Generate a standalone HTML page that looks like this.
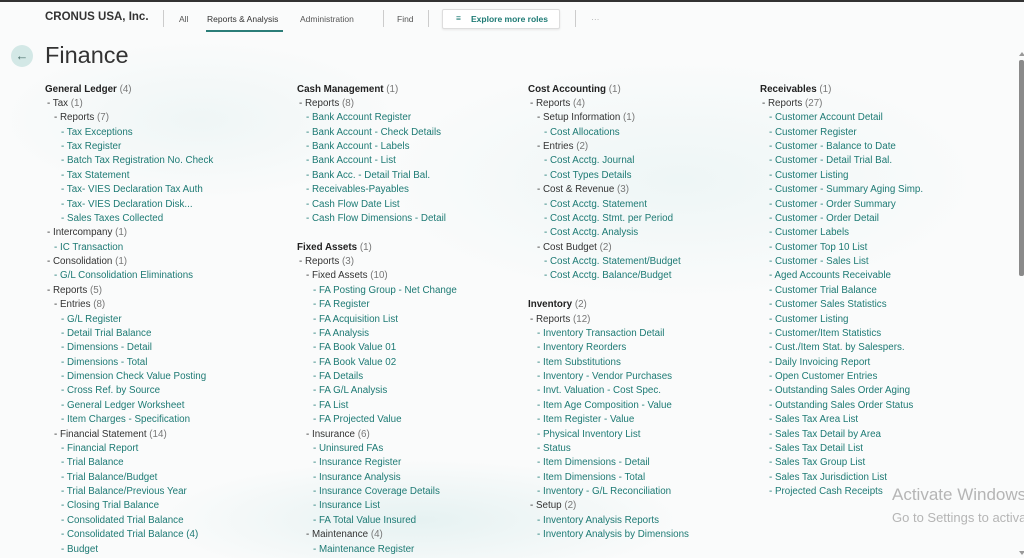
<!DOCTYPE html>
<html><head><meta charset="utf-8">
<style>
*{margin:0;padding:0;box-sizing:border-box}
html,body{width:1024px;height:558px;overflow:hidden}
body{position:relative;font-family:"Liberation Sans",sans-serif;
background:radial-gradient(ellipse 260px 60px at 420px 520px,#e6f2f2 0%,rgba(230,242,242,0) 100%),
radial-gradient(ellipse 300px 120px at 680px 180px,#eef6f6 0%,rgba(238,246,246,0) 100%),
radial-gradient(ellipse 200px 80px at 200px 120px,#eff6f6 0%,rgba(239,246,246,0) 100%),#fafbfb;}
.wrap{position:absolute;left:0;top:0;width:1024px;height:558px;overflow:hidden}
.top{position:absolute;left:0;top:0;width:1024px;height:2px;background:#333}
.hdr{position:absolute;top:0;left:0;width:1024px;height:36px;font-size:8.5px;color:#555}
.hdr span{position:absolute;top:14px}
.sep{position:absolute;top:10px;width:1px;height:17px;background:#ccc}
.col{position:absolute;top:82.5px;font-size:9.8px;line-height:14.375px;color:#333;white-space:nowrap}
.col div{height:14.375px}
.h{font-weight:bold;color:#222}
.c{color:#777;font-weight:normal}
.l{color:#1d7a74}
.i1{padding-left:2px}.i2{padding-left:9px}.i3{padding-left:16px}
.sb{position:absolute;left:1019px;top:60px;width:5px;height:216px;background:#8a8a8a;border-radius:2px}
</style></head><body><div class="wrap">
<div class="top"></div>
<div class="hdr">
<span style="left:45px;top:11px;font-size:11.5px;font-weight:bold;color:#333">CRONUS USA, Inc.</span>
<div class="sep" style="left:163px"></div>
<span style="left:179px">All</span>
<span style="left:207px;color:#333">Reports &amp; Analysis</span>
<div style="position:absolute;left:206px;top:30px;width:77px;height:2px;background:#2b7d78"></div>
<span style="left:300px">Administration</span>
<div class="sep" style="left:383px"></div>
<span style="left:397px">Find</span>
<div class="sep" style="left:428px"></div>
<div style="position:absolute;left:442px;top:9px;width:118px;height:20px;border:1px solid #ddd;border-radius:2px;background:#fff;box-shadow:0 1px 2px rgba(0,0,0,.08)"></div>
<span style="left:456px;top:13px;color:#1d7a74">&#8801;</span>
<span style="left:471px;color:#1d7a74;font-weight:bold">Explore more roles</span>
<div class="sep" style="left:575px"></div>
<span style="left:591px;color:#aaa">···</span>
</div>
<div style="position:absolute;left:11px;top:45px;width:22px;height:22px;border-radius:50%;background:#d3e8e6;color:#4a6f6c;font-size:13px;text-align:center;line-height:21px">&#8592;</div>
<div style="position:absolute;left:45px;top:42px;font-size:23.5px;color:#333">Finance</div>

<div class="col" style="left:45px">
<div class="h">General Ledger <span class="c">(4)</span></div>
<div class="i1">- Tax <span class="c">(1)</span></div>
<div class="i2">- Reports <span class="c">(7)</span></div>
<div class="i3 l">- Tax Exceptions</div>
<div class="i3 l">- Tax Register</div>
<div class="i3 l">- Batch Tax Registration No. Check</div>
<div class="i3 l">- Tax Statement</div>
<div class="i3 l">- Tax- VIES Declaration Tax Auth</div>
<div class="i3 l">- Tax- VIES Declaration Disk...</div>
<div class="i3 l">- Sales Taxes Collected</div>
<div class="i1">- Intercompany <span class="c">(1)</span></div>
<div class="i2 l">- IC Transaction</div>
<div class="i1">- Consolidation <span class="c">(1)</span></div>
<div class="i2 l">- G/L Consolidation Eliminations</div>
<div class="i1">- Reports <span class="c">(5)</span></div>
<div class="i2">- Entries <span class="c">(8)</span></div>
<div class="i3 l">- G/L Register</div>
<div class="i3 l">- Detail Trial Balance</div>
<div class="i3 l">- Dimensions - Detail</div>
<div class="i3 l">- Dimensions - Total</div>
<div class="i3 l">- Dimension Check Value Posting</div>
<div class="i3 l">- Cross Ref. by Source</div>
<div class="i3 l">- General Ledger Worksheet</div>
<div class="i3 l">- Item Charges - Specification</div>
<div class="i2">- Financial Statement <span class="c">(14)</span></div>
<div class="i3 l">- Financial Report</div>
<div class="i3 l">- Trial Balance</div>
<div class="i3 l">- Trial Balance/Budget</div>
<div class="i3 l">- Trial Balance/Previous Year</div>
<div class="i3 l">- Closing Trial Balance</div>
<div class="i3 l">- Consolidated Trial Balance</div>
<div class="i3 l">- Consolidated Trial Balance (4)</div>
<div class="i3 l">- Budget</div>
</div>

<div class="col" style="left:297px">
<div class="h">Cash Management <span class="c">(1)</span></div>
<div class="i1">- Reports <span class="c">(8)</span></div>
<div class="i2 l">- Bank Account Register</div>
<div class="i2 l">- Bank Account - Check Details</div>
<div class="i2 l">- Bank Account - Labels</div>
<div class="i2 l">- Bank Account - List</div>
<div class="i2 l">- Bank Acc. - Detail Trial Bal.</div>
<div class="i2 l">- Receivables-Payables</div>
<div class="i2 l">- Cash Flow Date List</div>
<div class="i2 l">- Cash Flow Dimensions - Detail</div>
<div></div>
<div class="h">Fixed Assets <span class="c">(1)</span></div>
<div class="i1">- Reports <span class="c">(3)</span></div>
<div class="i2">- Fixed Assets <span class="c">(10)</span></div>
<div class="i3 l">- FA Posting Group - Net Change</div>
<div class="i3 l">- FA Register</div>
<div class="i3 l">- FA Acquisition List</div>
<div class="i3 l">- FA Analysis</div>
<div class="i3 l">- FA Book Value 01</div>
<div class="i3 l">- FA Book Value 02</div>
<div class="i3 l">- FA Details</div>
<div class="i3 l">- FA G/L Analysis</div>
<div class="i3 l">- FA List</div>
<div class="i3 l">- FA Projected Value</div>
<div class="i2">- Insurance <span class="c">(6)</span></div>
<div class="i3 l">- Uninsured FAs</div>
<div class="i3 l">- Insurance Register</div>
<div class="i3 l">- Insurance Analysis</div>
<div class="i3 l">- Insurance Coverage Details</div>
<div class="i3 l">- Insurance List</div>
<div class="i3 l">- FA Total Value Insured</div>
<div class="i2">- Maintenance <span class="c">(4)</span></div>
<div class="i3 l">- Maintenance Register</div>
</div>

<div class="col" style="left:528px">
<div class="h">Cost Accounting <span class="c">(1)</span></div>
<div class="i1">- Reports <span class="c">(4)</span></div>
<div class="i2">- Setup Information <span class="c">(1)</span></div>
<div class="i3 l">- Cost Allocations</div>
<div class="i2">- Entries <span class="c">(2)</span></div>
<div class="i3 l">- Cost Acctg. Journal</div>
<div class="i3 l">- Cost Types Details</div>
<div class="i2">- Cost &amp; Revenue <span class="c">(3)</span></div>
<div class="i3 l">- Cost Acctg. Statement</div>
<div class="i3 l">- Cost Acctg. Stmt. per Period</div>
<div class="i3 l">- Cost Acctg. Analysis</div>
<div class="i2">- Cost Budget <span class="c">(2)</span></div>
<div class="i3 l">- Cost Acctg. Statement/Budget</div>
<div class="i3 l">- Cost Acctg. Balance/Budget</div>
<div></div>
<div class="h">Inventory <span class="c">(2)</span></div>
<div class="i1">- Reports <span class="c">(12)</span></div>
<div class="i2 l">- Inventory Transaction Detail</div>
<div class="i2 l">- Inventory Reorders</div>
<div class="i2 l">- Item Substitutions</div>
<div class="i2 l">- Inventory - Vendor Purchases</div>
<div class="i2 l">- Invt. Valuation - Cost Spec.</div>
<div class="i2 l">- Item Age Composition - Value</div>
<div class="i2 l">- Item Register - Value</div>
<div class="i2 l">- Physical Inventory List</div>
<div class="i2 l">- Status</div>
<div class="i2 l">- Item Dimensions - Detail</div>
<div class="i2 l">- Item Dimensions - Total</div>
<div class="i2 l">- Inventory - G/L Reconciliation</div>
<div class="i1">- Setup <span class="c">(2)</span></div>
<div class="i2 l">- Inventory Analysis Reports</div>
<div class="i2 l">- Inventory Analysis by Dimensions</div>
</div>

<div class="col" style="left:760px">
<div class="h">Receivables <span class="c">(1)</span></div>
<div class="i1">- Reports <span class="c">(27)</span></div>
<div class="i2 l">- Customer Account Detail</div>
<div class="i2 l">- Customer Register</div>
<div class="i2 l">- Customer - Balance to Date</div>
<div class="i2 l">- Customer - Detail Trial Bal.</div>
<div class="i2 l">- Customer Listing</div>
<div class="i2 l">- Customer - Summary Aging Simp.</div>
<div class="i2 l">- Customer - Order Summary</div>
<div class="i2 l">- Customer - Order Detail</div>
<div class="i2 l">- Customer Labels</div>
<div class="i2 l">- Customer Top 10 List</div>
<div class="i2 l">- Customer - Sales List</div>
<div class="i2 l">- Aged Accounts Receivable</div>
<div class="i2 l">- Customer Trial Balance</div>
<div class="i2 l">- Customer Sales Statistics</div>
<div class="i2 l">- Customer Listing</div>
<div class="i2 l">- Customer/Item Statistics</div>
<div class="i2 l">- Cust./Item Stat. by Salespers.</div>
<div class="i2 l">- Daily Invoicing Report</div>
<div class="i2 l">- Open Customer Entries</div>
<div class="i2 l">- Outstanding Sales Order Aging</div>
<div class="i2 l">- Outstanding Sales Order Status</div>
<div class="i2 l">- Sales Tax Area List</div>
<div class="i2 l">- Sales Tax Detail by Area</div>
<div class="i2 l">- Sales Tax Detail List</div>
<div class="i2 l">- Sales Tax Group List</div>
<div class="i2 l">- Sales Tax Jurisdiction List</div>
<div class="i2 l">- Projected Cash Receipts</div>
</div>

<div style="position:absolute;left:892px;top:485px;width:132px;overflow:hidden;font-size:17px;color:#b5b5b5;white-space:nowrap">Activate Windows</div>
<div style="position:absolute;left:892px;top:510px;width:132px;overflow:hidden;font-size:13px;color:#b5b5b5;white-space:nowrap">Go to Settings to activate</div>
<div class="sb"></div>
<div style="position:absolute;left:1019px;top:52px;width:0;height:0;border-left:3px solid transparent;border-right:3px solid transparent;border-bottom:4px solid #999"></div>
<div style="position:absolute;left:1019px;top:551px;width:0;height:0;border-left:3px solid transparent;border-right:3px solid transparent;border-top:4px solid #999"></div>
</div></body></html>
